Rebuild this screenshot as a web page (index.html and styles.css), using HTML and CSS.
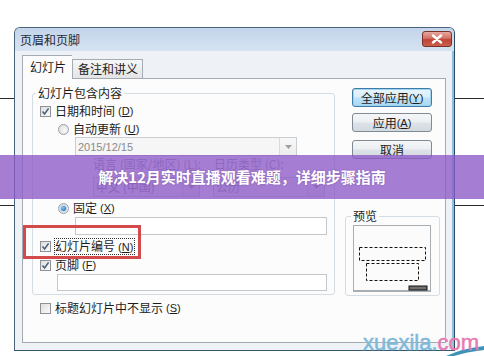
FILE: index.html
```html
<!DOCTYPE html>
<html lang="zh-CN">
<head>
<meta charset="utf-8">
<title>页眉和页脚</title>
<link rel="stylesheet" href="styles.css">
</head>
<body>
<div class="screen">
  <div class="window">
    <div class="titlebar">
      <span class="title">页眉和页脚</span>
      <span class="close"><svg width="12" height="10" viewBox="0 0 12 10"><path d="M2 1.5 L10 8.5 M10 1.5 L2 8.5" stroke="#ffffff" stroke-width="2.4" stroke-linecap="round"/></svg></span>
    </div>
    <div class="client">
      <div class="tabs">
        <div class="tab active">幻灯片</div>
        <div class="tab">备注和讲义</div>
      </div>
      <div class="panel">
        <div class="leftcol">
          <fieldset class="group main">
            <legend>幻灯片包含内容</legend>
            <div class="row r1"><span class="cb"><svg width="9" height="9" viewBox="0 0 9 9"><path d="M1.5 4.5 L3.6 7 L7.6 1.4" fill="none" stroke="#4a5f78" stroke-width="1.6"/></svg></span><span>日期和时间</span><span class="acc">(<u>D</u>)</span></div>
            <div class="row r2 ind"><span class="radio"></span><span>自动更新</span><span class="acc">(<u>U</u>)</span></div>
            <div class="combo date"><span class="val">2015/12/15</span><span class="arrow"><svg width="7" height="4" viewBox="0 0 7 4"><path d="M0 0 H7 L3.5 4 Z" fill="#a0a0a0"/></svg></span></div>
            <div class="labels"><span class="l1">语言 (国家/地区) (<u>L</u>):</span><span>日历类型 (<u>C</u>):</span></div>
            <div class="combos">
              <div class="combo lang"><span class="val">中文 (中国)</span><span class="arrow"><svg width="7" height="4" viewBox="0 0 7 4"><path d="M0 0 H7 L3.5 4 Z" fill="#a0a0a0"/></svg></span></div>
              <div class="combo cal"><span class="val">公历</span><span class="arrow"><svg width="7" height="4" viewBox="0 0 7 4"><path d="M0 0 H7 L3.5 4 Z" fill="#a0a0a0"/></svg></span></div>
            </div>
            <div class="row r3 ind"><span class="radio on"></span><span>固定</span><span class="acc">(<u>X</u>)</span></div>
            <div class="input fixed"></div>
            <div class="row r4"><span class="cb"><svg width="9" height="9" viewBox="0 0 9 9"><path d="M1.5 4.5 L3.6 7 L7.6 1.4" fill="none" stroke="#4a5f78" stroke-width="1.6"/></svg></span><span class="focus">幻灯片编号<span class="acc">(<u>N</u>)</span></span></div>
            <div class="row r5"><span class="cb"><svg width="9" height="9" viewBox="0 0 9 9"><path d="M1.5 4.5 L3.6 7 L7.6 1.4" fill="none" stroke="#4a5f78" stroke-width="1.6"/></svg></span><span>页脚</span><span class="acc">(<u>F</u>)</span></div>
            <div class="input footer"></div>
          </fieldset>
          <div class="row bottom"><span class="cb"></span><span>标题幻灯片中不显示</span><span class="acc">(<u>S</u>)</span></div>
        </div>
        <div class="rightcol">
          <div class="btn default">全部应用 <span class="acc">(<u>Y</u>)</span></div>
          <div class="btn b2">应用 <span class="acc">(<u>A</u>)</span></div>
          <div class="btn b3">取消</div>
          <fieldset class="group preview">
            <legend>预览</legend>
            <div class="pbox">
              <svg width="76" height="65" viewBox="0 0 76 65">
                <rect x="5.5" y="21.5" width="66" height="13" fill="none" stroke="#111" stroke-dasharray="3 2"/>
                <rect x="12.5" y="37.5" width="52" height="17" fill="none" stroke="#111" stroke-dasharray="3 2"/>
                <rect x="55" y="60" width="18" height="4" fill="#707070" stroke="#111" stroke-width="1"/>
              </svg>
            </div>
          </fieldset>
        </div>
      </div>
    </div>
  </div>
  <div class="highlight"></div>
  <div class="band">解决12月实时直播观看难题，详细步骤指南</div>
  <svg class="swoosh" width="40" height="12" viewBox="0 0 40 12"><path d="M2 12 Q20 4 40 2 L40 6 Q22 8 10 12 Z" fill="#3f93b8"/></svg>
  <div class="watermark">xuexila.<span class="com">com</span></div>
</div>
</body>
</html>
```

FILE: styles.css
```css
html, body {
  margin: 0;
  padding: 0;
}
body {
  font-family: "Noto Sans CJK SC", "Liberation Sans", sans-serif;
  font-size: 12px;
  color: #1c1c1c;
}
.screen {
  position: relative;
  width: 484px;
  height: 356px;
  overflow: hidden;
  background:
    linear-gradient(#2a2a2a, #2a2a2a) 0 98px / 100% 1px no-repeat,
    linear-gradient(#2a2a2a, #2a2a2a) 0 205px / 100% 1px no-repeat,
    #ffffff;
  padding-top: 27px;
  box-sizing: border-box;
}
.window {
  margin-left: 14px;
  width: 441px;
  height: 324px;
  box-sizing: border-box;
  border: 1px solid #4c6379;
  border-right-color: #2c4d63;
  border-bottom-color: #35576e;
  border-radius: 6px 6px 0 0;
  background: #eef2f7;
  box-shadow: inset -2px 0 0 #8cc0dc;
  display: flex;
  flex-direction: column;
}
.titlebar {
  height: 23px;
  flex: none;
  display: flex;
  align-items: center;
  justify-content: space-between;
  padding: 0 2px 0 5px;
  background: linear-gradient(#c3d5eb, #d6e3f2);
  border-radius: 5px 5px 0 0;
}
.title {
  font-size: 12px;
  line-height: 14px;
  color: #1e2a36;
}
.close {
  width: 30px;
  height: 16px;
  box-sizing: border-box;
  border: 1px solid #7a3128;
  border-radius: 3px;
  background: linear-gradient(#e8a89e 0%, #d27064 45%, #c04434 55%, #c9604e 100%);
  display: flex;
  align-items: center;
  justify-content: center;
  margin-top: -1px;
}
.client {
  flex: 1;
  padding: 4px 8px 7px 7px;
  display: flex;
  flex-direction: column;
}
.tabs {
  height: 23px;
  display: flex;
  align-items: flex-end;
  position: relative;
  z-index: 1;
}
.tab {
  height: 19px;
  box-sizing: border-box;
  padding: 0 4px 0 5px;
  border: 1px solid #a3acb5;
  border-bottom: none;
  background: linear-gradient(#f7f7f7, #e4e4e4);
  font-size: 12px;
  line-height: 18px;
}
.tab.active {
  height: 24px;
  margin-bottom: -1px;
  padding: 2px 6px 0 7px;
  background: #fcfcfc;
  border-right: none;
}
.panel {
  height: 265px;
  box-sizing: border-box;
  border: 1px solid #a3acb5;
  background: #fcfcfc;
  display: flex;
  padding: 7px 5px 0 9px;
}
.leftcol {
  width: 303px;
  flex: none;
}
.group {
  margin: 0;
  border: 1px solid #d5dde4;
  border-radius: 3px;
  min-width: 0;
  box-sizing: border-box;
}
.group legend {
  padding: 0 2px;
  font-size: 12px;
  line-height: 14px;
  color: #1c1c1c;
}
.main {
  width: 303px;
  padding: 0 3px 3px 3px;
}
.row {
  display: flex;
  align-items: center;
  white-space: nowrap;
  line-height: 14px;
}
.acc {
  font-family: "Liberation Sans", sans-serif;
  font-size: 11px;
  margin-left: 3px;
}
.btn .acc {
  margin-left: 0;
}
.cb {
  width: 11px;
  height: 11px;
  box-sizing: border-box;
  border: 1px solid #8e9297;
  background: linear-gradient(135deg, #dedede, #fbfbfb);
  display: flex;
  align-items: center;
  justify-content: center;
  margin-left: 4px;
  margin-right: 4px;
  flex: none;
}
.radio {
  width: 11px;
  height: 11px;
  box-sizing: border-box;
  border: 1px solid #9aa0a6;
  border-radius: 50%;
  background: radial-gradient(circle at 60% 60%, #fafafa, #d8d8d8);
  margin-right: 4px;
  display: flex;
  align-items: center;
  justify-content: center;
  flex: none;
}
.radio.on::after {
  content: "";
  width: 5px;
  height: 5px;
  border-radius: 50%;
  background: radial-gradient(circle at 35% 35%, #8fc4f0, #1c5ca6);
  box-shadow: 0 0 0 1px #b6d6f0;
}
.ind {
  padding-left: 22px;
}
.r1 { margin-top: 1px; height: 20px; }
.r2 { height: 16px; }
.combo {
  height: 19px;
  box-sizing: border-box;
  border: 1px solid #c9ced3;
  background: #f6f6f6;
  display: flex;
  align-items: center;
  justify-content: space-between;
  color: #8a8a8a;
}
.combo .val {
  padding-left: 2px;
  line-height: 14px;
}
.date {
  margin-left: 39px;
  width: 222px;
}
.date .val {
  font-family: "Liberation Sans", sans-serif;
  font-size: 11px;
}
.arrow {
  width: 17px;
  height: 100%;
  box-sizing: border-box;
  border-left: 1px solid #dadada;
  background: linear-gradient(#f8f8f8, #ececec);
  display: flex;
  align-items: center;
  justify-content: center;
}
.labels {
  height: 14px;
  margin-top: 1px;
  margin-left: 57px;
  display: flex;
  line-height: 14px;
  color: #9a9a9a;
  white-space: nowrap;
}
.labels .l1 {
  width: 121px;
}
.combos {
  margin-top: 6px;
  margin-left: 57px;
  display: flex;
  gap: 13px;
}
.combos .combo {
  height: 20px;
}
.lang { width: 107px; }
.cal { width: 112px; }
.r3 { margin-top: 2px; height: 18px; }
.input {
  box-sizing: border-box;
  border: 1px solid #c3c8cd;
  background: #ffffff;
}
.fixed {
  margin-left: 39px;
  width: 252px;
  height: 18px;
}
.r4 { margin-top: 1px; height: 20px; }
.r5 { height: 18px; }
.focus {
  outline: 1px dotted #333;
  outline-offset: 0;
  padding: 0 1px 0 0;
  line-height: 14px;
}
.footer {
  margin-left: 21px;
  width: 270px;
  height: 17px;
}
.bottom {
  margin-top: 4px;
  height: 18px;
  padding-left: 4px;
}
.rightcol {
  margin-left: 10px;
  width: 95px;
  flex: none;
}
.btn {
  margin-left: 7px;
  width: 80px;
  height: 19px;
  box-sizing: border-box;
  border: 1px solid #7f8a95;
  border-radius: 3px;
  background: linear-gradient(#f4f6f8 0%, #eceff2 48%, #dde3e8 52%, #d2d9df 100%);
  display: flex;
  align-items: center;
  justify-content: center;
  line-height: 14px;
  white-space: nowrap;
}
.btn.default {
  margin-top: 2px;
  border-color: #3d7ba8;
  background: linear-gradient(#e9f5fc 0%, #d7eefb 48%, #bfe3f8 52%, #a9d7f1 100%);
  box-shadow: inset 0 0 0 1px #9fd3f0;
}
.b2 { margin-top: 6px; }
.b3 { margin-top: 8px; }
.preview {
  margin-top: 50px;
  width: 95px;
  padding: 0 3px 3px 5px;
}
.pbox {
  margin-top: 2px;
  margin-left: 2px;
  width: 78px;
  height: 67px;
  box-sizing: border-box;
  border: 1px solid #a9aeb3;
  border-bottom-width: 2px;
  background: #fbfbfb;
}
.pbox svg {
  display: block;
}
.highlight {
  position: absolute;
  left: 23px;
  top: 225px;
  width: 118px;
  height: 34px;
  box-sizing: border-box;
  border: 3px solid #d24a4a;
}
.band {
  position: absolute;
  left: 0;
  top: 155px;
  width: 484px;
  height: 44px;
  background: rgba(140, 90, 200, 0.78);
  color: #ffffff;
  font-family: "Noto Sans CJK SC", sans-serif;
  font-weight: bold;
  font-size: 15px;
  display: flex;
  align-items: center;
  justify-content: center;
  padding-bottom: 1px;
  box-sizing: border-box;
  text-shadow: 0 0 2px rgba(80, 40, 120, 0.4);
}
.swoosh {
  position: absolute;
  left: 444px;
  top: 344px;
}
.watermark {
  position: absolute;
  left: 363px;
  top: 332px;
  font-family: "Liberation Sans", sans-serif;
  font-size: 22px;
  line-height: 22px;
  color: #7fb9da;
  -webkit-text-stroke: 0.5px #7fb9da;
}
.watermark .com {
  color: #e67bb2;
  -webkit-text-stroke: 0.5px #e67bb2;
}
```
